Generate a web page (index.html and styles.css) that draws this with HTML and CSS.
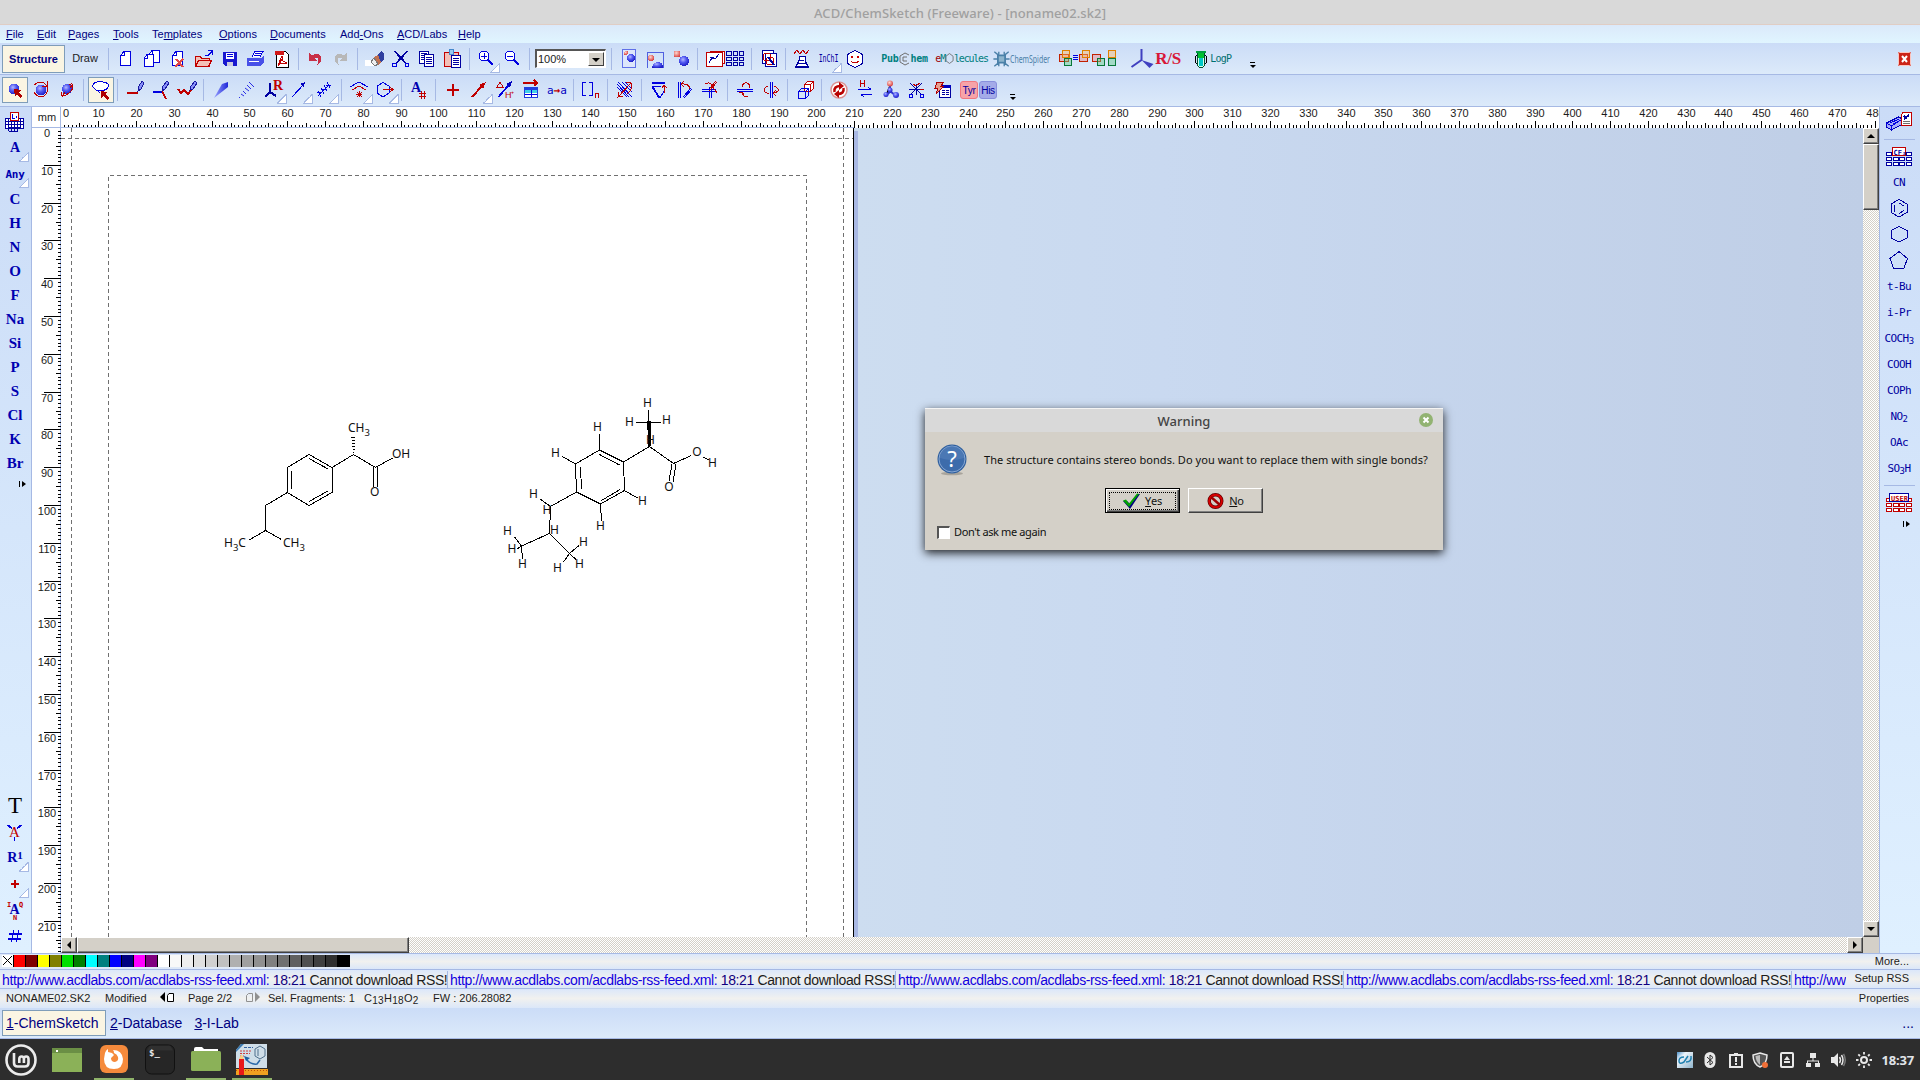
FILE: index.html
```html
<!DOCTYPE html>
<html lang="en">
<head>
    <meta charset="UTF-8">
    <title>ACD/ChemSketch (Freeware) - [noname02.sk2]</title>
    <link rel="stylesheet" href="styles.css">
</head>
<body>

    <svg class="defs" width="0" height="0">
        <defs>
            <radialGradient id="ball" cx="40%" cy="35%" r="65%"><stop offset="0" stop-color="#b4b8ff"/><stop offset=".5" stop-color="#5058f0"/><stop offset="1" stop-color="#2020c8"/></radialGradient>
            <radialGradient id="redball" cx="40%" cy="35%" r="65%"><stop offset="0" stop-color="#ffd8d0"/><stop offset="1" stop-color="#d84040"/></radialGradient>
            <linearGradient id="wedge" x1="0" x2="1"><stop offset="0" stop-color="#9aa4ff"/><stop offset="1" stop-color="#2028d8"/></linearGradient>
            <linearGradient id="sheet" x1="0" y1="0" x2="1" y2="1"><stop offset="0" stop-color="#4a90c8"/><stop offset=".3" stop-color="#eef4fa"/><stop offset="1" stop-color="#8fb4cc"/></linearGradient>
        </defs>
    </svg>

    <header class="titlebar">ACD/ChemSketch (Freeware) - [noname02.sk2]</header>

    <nav class="menu">
        <span><u>F</u>ile</span><span><u>E</u>dit</span><span><u>P</u>ages</span><span><u>T</u>ools</span><span>Te<u>m</u>plates</span><span><u>O</u>ptions</span><span><u>D</u>ocuments</span><span>Add<u>-</u>Ons</span><span><u>A</u>CD/Labs</span><span><u>H</u>elp</span>
    </nav>

    <!-- main toolbar -->
    <div class="toolbar top">
        <div class="mode active">Structure</div>
        <div class="mode draw">Draw</div>
        <i class="sep"></i>
        <div class="tool"><svg viewBox="0 0 22 22"><path class="b w" d="M9 3.500h6.500v14h-10v-10z"/><path class="b" d="M9.500 3.500v4h-4"/></svg></div>
        <div class="tool"><svg viewBox="0 0 22 22"><path class="b w" d="M11 2.500h7.500v12h-10v-9z"/><path class="b w" d="M6 6.500h6.500v12h-9v-9z"/><path class="b" d="M6.500 6.500v4h-3M11.500 2.500v4"/></svg></div>
        <div class="tool"><svg viewBox="0 0 22 22"><path class="b w" d="M9 3.500h6.500v14h-10v-10z"/><path class="b" d="M9.500 3.500v4h-4"/><path stroke="#e04848" stroke-width="2" d="M9 11l7 8M16 11l-8 8"/></svg></div>
        <div class="tool"><svg viewBox="0 0 22 22"><path class="r" d="M2.500 18.500v-10h5l1 2h8v8z" fill="#f5b0b0"/><path class="r" fill="#f8d0d0" d="M2.500 18.500l3-6h13l-3 6z"/><path class="b" d="M12 7.500h3l4-4M15 2.500h4.500v4"/></svg></div>
        <div class="tool"><svg viewBox="0 0 22 22"><path fill="#1818d0" d="M4 4h14v14h-12l-2-2z"/><path fill="#fff" d="M7 5h8v6h-8z"/><path class="b" d="M8 6.500h6M8 8.500h6"/><path fill="#ccd" d="M8 14h6v4h-6z"/></svg></div>
        <div class="tool"><svg viewBox="0 0 22 22"><path class="b w" d="M7 9l3-5.500h8l-3 5.500"/><path fill="#4850e8" d="M2 10h14l3-2v6l-4 4h-13z"/><path class="b" d="M10 5.500h6M9 7.500h6"/><path fill="#fff" d="M4 13h10v1h-10z"/></svg></div>
        <div class="tool"><svg viewBox="0 0 22 22"><path class="k w" d="M5.500 3.500h9l3 3v13h-12z"/><path fill="#d01818" d="M4 3h9v4h-9z"/><path class="r" d="M7 17l4-9 1 5 4 2h-6l-3 3M8 17l4-8"/></svg></div>
        <i class="sep"></i>
        <div class="tool"><svg viewBox="0 0 22 22"><path fill="#c83048" d="M5 5v8h8l-3-3q5-2 4 4 0 3-3 4 7-2 6-8-1-6-9-3z"/></svg></div>
        <div class="tool"><svg viewBox="0 0 22 22"><path fill="#b8b8b8" d="M17 5v8h-8l3-3q-5-2-4 4 0 3 3 4-7-2-6-8 1-6 9-3z"/></svg></div>
        <i class="sep"></i>
        <div class="tool"><svg viewBox="0 0 22 22"><path fill="#fff" d="M1 12h9v6h-9z"/><path fill="#3040a0" d="M13 7l5-4 2 3v5l-4 5z"/><path fill="#c07050" d="M10 9l4-2 3 7-3 3z"/><path fill="#eee" stroke="#777" d="M7 14l3-4 4 6-3 2z"/></svg></div>
        <div class="tool"><svg viewBox="0 0 22 22"><path class="n" d="M4 3l12 13M5 3l12 13M18 3l-12 13M17 3l-12 13"/><circle class="b" cx="4.500" cy="17" r="2"/><circle class="b" cx="17" cy="17" r="2"/></svg></div>
        <div class="tool"><svg viewBox="0 0 22 22"><path class="n w" d="M3.500 3.500h9v12h-9z"/><path class="n w" d="M8.500 6.500h9v12h-9z"/><path class="n" d="M5 5.500h6M5 7.500h3M5 9.500h3M5 11.500h3M10 9.500h6M10 11.500h6M10 13.500h6M10 15.500h6"/></svg></div>
        <div class="tool"><svg viewBox="0 0 22 22"><path class="r" fill="#f0b0a8" d="M2.500 4.500h14v14h-14z"/><path fill="#9ce" stroke="#48c" d="M7.500 1.500h4v5h-4z"/><path class="n w" d="M9.500 7.500h9v12h-9z"/><path class="n" d="M11 10.500h6M11 12.500h6M11 14.500h6M11 16.500h6"/></svg></div>
        <i class="sep"></i>
        <div class="tool more"><svg viewBox="0 0 22 22"><circle class="b w" cx="9" cy="8" r="5"/><path class="b" d="M6 8.500h6M9.500 5v6"/><path class="b t2" d="M13 12l5 5"/></svg></div>
        <div class="tool"><svg viewBox="0 0 22 22"><circle class="b w" cx="9" cy="8" r="5"/><path class="b" d="M6 8.500h6"/><path class="b t2" d="M13 12l5 5"/></svg></div>
        <i class="sep"></i>
        <div class="combo"><span>100%</span><b></b></div>
        <i class="sep"></i>
        <div class="tool"><svg viewBox="0 0 22 22"><path fill="#dde6fb" stroke="#6070e8" d="M4.500 1.500h13v18h-13z"/><circle cx="8" cy="5" r="2" fill="url(#redball)"/><circle cx="13" cy="10" r="4" fill="url(#ball)"/></svg></div>
        <div class="tool"><svg viewBox="0 0 22 22"><path d="M3.500 19.500v-15h16v15" fill="none" stroke="#5060e0"/><circle cx="7" cy="10" r="3" fill="url(#redball)"/><path d="M8 20q1-6 6-6t5 6z" fill="url(#ball)"/></svg></div>
        <div class="tool"><svg viewBox="0 0 22 22"><circle cx="7" cy="6" r="3.500" fill="url(#redball)"/><circle cx="14" cy="13" r="5" fill="url(#ball)"/></svg></div>
        <i class="sep"></i>
        <div class="tool wide"><svg viewBox="0 0 40 22"><path class="n" d="M21.500 3.500h5v4h-5zM28.500 3.500h4v4h-4zM34.500 3.500h4v4h-4zM21.500 9.500h5v3h-5zM28.500 9.500h4v3h-4zM34.500 9.500h4v3h-4zM21.500 14.500h5v3h-5zM28.500 14.500h4v3h-4zM34.500 14.500h4v3h-4z"/><path class="r w" d="M5.500 3.500h14v12h-14z"/><path class="r w" d="M1.500 4.500h16v14h-16z"/><path class="n" d="M4 15l3-5h4l3-4M5 9.500h4"/></svg></div>
        <i class="sep"></i>
        <div class="tool"><svg viewBox="0 0 22 22"><path class="n w" d="M4.500 2.500h11v13h-11z"/><path class="n w" d="M7.500 5.500h11v13h-11z"/><circle class="r" cx="9" cy="9" r="4"/><circle class="r" cx="12" cy="13" r="4"/><path class="n t2" d="M10 9l6 8"/></svg></div>
        <i class="sep"></i>
        <div class="tool"><svg viewBox="0 0 22 22"><path class="r" d="M3 6l3-4 3 4 3-4 3 4 3-4"/><path class="n w" d="M8 8.500h6v4l3 6h-12l3-6z"/><path class="n" d="M7 15.500h8M9 12.500h4M4 19.500h14"/></svg></div>
        <div class="tool more inchi"><span>InChI</span></div>
        <div class="tool face"><svg viewBox="0 0 22 22"><path class="n w" d="M11 2.500l7.500 4v9l-7.500 4-7.500-4v-9z"/><path fill="#c00" d="M7 8h2v2h-2zM13 8h2v2h-2z"/><path class="r" d="M7 13q4 4 8 0"/></svg></div>
        <div class="brand pubchem">Pub<svg viewBox="0 0 12 14"><path class="g" d="M10 3l-4-2-5 3v6l5 3 4-2M8 5L4 5v4h4"/></svg>hem</div>
        <div class="brand emol"><em>e</em>M<svg viewBox="0 0 10 12"><path class="g" d="M5 .5l4 3v5l-4 3-4-3v-5z"/></svg>lecules</div>
        <div class="brand spider"><svg viewBox="0 0 18 20"><path d="M1 2l5 4M17 2l-5 4M0 10h18M1 18l5-4M17 18l-5-4M6 2v3M12 2v3M6 18v-4M12 18v-4" stroke="#4a80a8" stroke-width="1.500"/><path d="M5 6h8v8h-8z" fill="#8db4cc" stroke="#4a80a8" stroke-width="2"/></svg><span>ChemSpider</span></div>
        <div class="brand"><svg class="overlap" viewBox="0 0 60 22"><g fill-opacity=".45"><path fill="#e88" stroke="#c22000" d="M1.500 6.500h9v7h-9z"/><path fill="#fb6" stroke="#e08000" d="M4.500 2.500h7v7h-7z"/><path fill="#6c8" stroke="#087838" d="M6.500 10.500h7v7h-7z"/><path fill="#e88" stroke="#c22000" d="M21.500 6.500h8v7h-8z"/><path fill="#fb6" stroke="#e08000" d="M24.500 2.500h7v7h-7z"/><path fill="#e88" stroke="#c22000" d="M34.500 6.500h8v7h-8z"/><path fill="#6c8" stroke="#087838" d="M39.500 10.500h7v7h-7z"/><path fill="#6c8" stroke="#087838" d="M50.500 10.500h7v7h-7z"/><path fill="#fb6" stroke="#e08000" d="M50.500 2.500h7v7h-7z"/></g><path class="b" d="M15 7.500h5M15 9.500h5M15 11.500h5"/></svg></div>
        <div class="brand rs"><svg viewBox="0 0 24 22"><path fill="none" stroke="#4040c0" stroke-width="2" d="M11 1v11l-10 7"/><path fill="#4040c0" d="M11 12l12 4-4 4z"/></svg>R/S</div>
        <div class="brand logp"><svg viewBox="0 0 14 20"><path fill="#d8ffe8" stroke="#005030" d="M3.500 2.500h7v14q-3.500 4-7 0z"/><path fill="#00c030" d="M4 4h6v5h-6z"/><path fill="#00c8c8" d="M5 9h4v8h-4z"/><path fill="#00a040" d="M2 2h10v2h-10z"/><path class="k" d="M2.500 6l-1 2v5l1 2M11.500 6l1 2v5l-1 2"/></svg>LogP</div>
        <div class="overflow"></div>
        <div class="doc-close"><svg viewBox="0 0 13 14"><rect width="13" height="14" rx="1" fill="#cc2418"/><rect x=".5" y=".5" width="12" height="13" rx="1" fill="none" stroke="#fbc6c0"/><path d="M4 4l5 6M9 4l-5 6" stroke="#fff" stroke-width="2"/></svg></div>
    </div>

    <!-- structure toolbar -->
    <div class="toolbar tools">
        <div class="tool on"><svg viewBox="0 0 22 22"><circle cx="10" cy="10" r="5.500" fill="url(#ball)"/><path fill="#b00000" d="M10 10l7 1-2 2 3 4-2 2-3-4-2 2z"/></svg></div>
        <div class="tool"><svg viewBox="0 0 22 22"><circle cx="11" cy="11" r="5.500" fill="url(#ball)"/><path class="r" d="M4 6q7-6 12 0 4 6-2 11-7 2-10-4M17 2v5h-5"/></svg></div>
        <div class="tool"><svg viewBox="0 0 22 22"><circle cx="11" cy="10" r="5" fill="url(#ball)"/><path class="r" d="M6 13q-2 6 4 3 7-4 7-9 0-4-4-1M14 9l3-4M6 18l3-5"/></svg></div>
        <i class="sep"></i>
        <div class="tool on"><svg viewBox="0 0 22 22"><path class="b w" d="M8 12q-6-3-5-6 1-4 10-3 7 1 5 5-2 4-7 3-4 0-1 3"/><path fill="#b00000" d="M11 12l6 1-2 2 4 4-2 2-4-4-2 2z"/></svg></div>
        <i class="sep"></i>
        <div class="tool"><svg viewBox="0 0 22 22"><path class="r t2" d="M3 14h11"/><path fill="#8890f8" stroke="#1818a0" d="M14 12l1-5 3-5 2 2-3 6z"/></svg></div>
        <div class="tool"><svg viewBox="0 0 22 22"><path class="b t2" d="M3 13h9"/><path class="r t2" d="M12 12l4 8"/><path fill="#8890f8" stroke="#1818a0" d="M12 12l1-5 4-5 2 2-4 6z"/></svg></div>
        <div class="tool"><svg viewBox="0 0 22 22"><path class="r t2" d="M2 10l3 4 3-3 4 4 3-4"/><path fill="#8890f8" stroke="#1818a0" d="M14 11l1-4 4-5 2 2-4 6z"/></svg></div>
        <i class="sep"></i>
        <div class="tool"><svg class="soft" viewBox="0 0 22 22"><path fill="url(#wedge)" d="M4 19L12 5l6-2v5z"/></svg></div>
        <div class="tool"><svg class="soft" viewBox="0 0 22 22"><path class="b" d="M3 19l1-1M5 15l3 2M7 12l3 3M9 9l4 3M11 6l4 4M13 3l5 5" stroke-opacity=".8"/></svg></div>
        <div class="tool more"><svg viewBox="0 0 22 22"><path class="n t2" d="M8 4v9l-5 5M8 13l6 4"/><text x="11" y="11" class="letter red">R</text></svg></div>
        <div class="tool more"><svg viewBox="0 0 22 22"><path class="b" d="M4 18L17 4"/><path fill="#0000c0" d="M17 3l-1 5-4-3z"/></svg></div>
        <div class="tool more"><svg viewBox="0 0 22 22"><path class="b" d="M4 17l11-11M4 12l3 6M7 9l3 6M10 6l3 6M13 3l3 6M3 13h5M7 10h6M12 6h5"/></svg></div>
        <i class="sep"></i>
        <div class="tool more"><svg viewBox="0 0 22 22"><path class="b" d="M2 8l9-5 9 5"/><path class="r" d="M4 11l7-4 7 4M8 15.500h6M11.500 12v6M9 13l5 5M14 13l-5 5"/></svg></div>
        <div class="tool more"><svg viewBox="0 0 22 22"><path class="b" d="M9 3.500l6 3.500v7l-6 4-6-4v-7z"/><path class="r" d="M9 10.500h10M16 8l3 2.500-3 2.500"/></svg></div>
        <i class="sep"></i>
        <div class="tool"><svg viewBox="0 0 22 22"><text x="3" y="13" class="letter blue">A</text><path class="r" d="M11 14.500h7M11 17.500h7M13.500 12v8M16.500 12v8"/></svg></div>
        <i class="sep"></i>
        <div class="tool"><svg viewBox="0 0 22 22"><path class="r t2" d="M5 11h12M11 5v12"/></svg></div>
        <div class="tool more"><svg viewBox="0 0 22 22"><path class="r t2" d="M4 18L15 6"/><path fill="#c00000" d="M18 3l-3 7-4-4z"/></svg></div>
        <div class="tool"><svg viewBox="0 0 22 22"><path class="r" d="M3 8l3-5 3 5z"/><path class="b" d="M4 18L15 5M5 18L16 5"/><path fill="#0000c0" d="M18 2l-2 7-4-4z"/><text x="11" y="19" class="small red">H⁺</text></svg></div>
        <div class="tool"><svg viewBox="0 0 22 22"><path class="r t2" d="M3 4h13M14 1l3 3-3 3"/><path fill="#2040e0" d="M4 8h14v11h-14z"/><path fill="#40d0e8" d="M5 11h12v3h-12z"/><path fill="#fff" d="M5 14h12v4h-12z"/><path class="b" d="M11.500 11v7M5 15.500h12"/></svg></div>
        <div class="tool"><span class="aa">a<b>→</b>a</span></div>
        <i class="sep"></i>
        <div class="tool"><svg viewBox="0 0 22 22"><path class="b" d="M6 3.500h-3.500v13h3.500M9 3.500h3.500v13h-3.500"/><path class="r" d="M15.500 19v-5h3v5"/></svg></div>
        <i class="sep"></i>
        <div class="tool"><svg viewBox="0 0 22 22"><path class="b" d="M4 3l14 15M3 8l10 10M8 3l10 10M3 5l12 13M11 3l7 7"/><path class="r" d="M4 18L17 4M5 13l-1 5 5-1M12 4q5-2 6 2 0 5-5 9"/></svg></div>
        <i class="sep"></i>
        <div class="tool"><svg viewBox="0 0 22 22"><path class="b" d="M4 3.500h13M4 4.500h13M4 7.500h9M4 8l7 11M5 8l7 11 4-7"/><path class="r" d="M16 14v-7M14 9l2-3 3 3"/></svg></div>
        <div class="tool"><svg viewBox="0 0 22 22"><path class="b" d="M4.500 3v16M6.500 3v16M9 18l8-9M10 19l8-9"/><path class="r" d="M7 5q8-1 9 5M10 2l-3 3 3 3"/></svg></div>
        <div class="tool"><svg viewBox="0 0 22 22"><path class="b" d="M2 10.500h14M2 12.500h14M9.500 8v11M11.500 8v11"/><path class="r" d="M5 5q5-3 7 2l5 7M17 3l-8 9M16 2l-6 7"/></svg></div>
        <i class="sep"></i>
        <div class="tool"><svg viewBox="0 0 22 22"><path class="b" d="M3 10.500h16M3 12.500h16"/><path class="r" d="M8 8q1-5 5-4 4 2 2 5M8 14q2 5 6 3M5 14l3-1 2 3"/></svg></div>
        <div class="tool"><svg viewBox="0 0 22 22"><path class="b" d="M10.500 3v16M12.500 3v16"/><path class="r" d="M8 7q-5 2-3 6 3 2 4 2M14 7q5 2 4 5-2 2-5 2M16 17l-3-3 3-3"/></svg></div>
        <i class="sep"></i>
        <div class="tool"><svg viewBox="0 0 22 22"><path class="r w" d="M10.500 5.500l3-3h6v7l-3 3h-6zM10.500 5.500h6v7M16.500 5.500l3-3"/><path class="b" d="M4.500 12.500l3-3h7v7l-3 3h-7zM4.500 12.500h7v7M11.500 12.500l3-3"/></svg></div>
        <i class="sep"></i>
        <div class="tool"><svg class="soft" viewBox="0 0 22 22"><circle cx="11" cy="11" r="8" fill="#fff" stroke="#dc9090" stroke-width="1.500"/><path fill="none" stroke="#b80000" stroke-width="2.500" d="M6.500 13q-1-6 6-6M15.500 9q1 6-6 6"/><path fill="#b80000" d="M11 3l5 4-5 4zM11 19l-5-4 5-4z"/></svg></div>
        <div class="tool"><svg viewBox="0 0 22 22"><path class="r" d="M6.500 1v7M10.500 1v7M7 4.500h3"/><path class="b" d="M4 10.500h13M14 8l3 2.500M18 15.500h-11M10 18l-3-2.500"/></svg></div>
        <div class="tool"><svg class="soft" viewBox="0 0 22 22"><path stroke="#3038d0" stroke-width="2" d="M10 5v8l-5 4M10 12l6 5"/><circle cx="10" cy="4.500" r="3" fill="url(#redball)"/><circle cx="10" cy="11" r="2.500" fill="url(#ball)"/><circle cx="6" cy="15.500" r="2.500" fill="url(#ball)"/><circle cx="16" cy="16" r="3" fill="url(#ball)"/></svg></div>
        <div class="tool"><svg viewBox="0 0 22 22"><path class="n" d="M4 4l12 12M16 4L4 16M3 10.500h15M10.500 5v11"/><path class="r" d="M7 5l3 2 4-3M14 11l4-1"/><circle class="b" cx="5" cy="17" r="2"/><circle class="b" cx="16" cy="17" r="2"/></svg></div>
        <div class="tool"><svg viewBox="0 0 22 22"><path class="n w" d="M7.500 6.500h11v12h-11z"/><path fill="#0000c0" d="M7 6h12v3h-12z"/><path class="n" d="M10 11.500h3M14 11.500h3M10 13.500h3M14 13.500h3M10 15.500h3M14 15.500h3"/><path fill="#e8a090" stroke="#b00000" d="M5 3h7l-3 4h3l-8 8 2-6h-3z"/></svg></div>
        <div class="peptide"><span>Tyr</span><span>His</span></div>
        <div class="overflow"></div>
    </div>

    <main class="work">
        <aside class="side left">
            <div class="cell"><svg viewBox="0 0 22 22"><path class="n w" d="M1.500 7.500h18v10h-18z"/><path class="n" d="M1 10.500h18M1 13.500h18M4 16.500h12M4.500 7v13M7.500 8v12M10.500 8v12M13.500 8v12M16.500 7v10M4.500 20h9"/><path class="r w" d="M6.500 1.500h8v8h-8z"/><path class="b" d="M8.500 3v4h2M12.500 5v2"/></svg></div>
            <div class="cell mono more">A</div>
            <div class="cell mono any more">Any</div>
            <div class="el">C</div><div class="el">H</div><div class="el">N</div><div class="el">O</div><div class="el">F</div><div class="el">Na</div><div class="el">Si</div><div class="el">P</div><div class="el">S</div><div class="el">Cl</div><div class="el">K</div><div class="el">Br</div>
            <div class="next"><svg viewBox="0 0 7 6"><path d="M0 0h1v6h-1zM3 0l4 3-4 3z"/></svg></div>
            <div class="cell push bigt">T</div>
            <div class="cell"><svg viewBox="0 0 22 22"><path class="b" d="M3 4l5 4M4 4l4 3M18 4l-5 4M17 4l-4 3M10.500 16v4"/><text x="5" y="16" class="letter red thin">A</text></svg></div>
            <div class="cell mono r1 more">R<sup>1</sup></div>
            <div class="cell more"><svg viewBox="0 0 22 22"><path class="r t2" d="M7 11h8M11 7v8"/></svg></div>
            <div class="cell"><svg viewBox="0 0 22 22"><text x="5.500" y="15" class="letter blue">A</text><text x="3" y="8" class="tiny">I</text><text x="15" y="8" class="tiny">Q</text><text x="9" y="21" class="tiny">N</text></svg></div>
            <div class="cell"><svg viewBox="0 0 22 22"><path class="b" d="M5 9.500h13M4 13.500h13M9.500 5l-2 12M14.500 5l-2 12"/><path class="b" d="M5 8.500h13M4 14.500h13"/></svg></div>
        </aside>

        <section class="editor">
            <div class="unit">mm</div>
            <svg class="ruler-h" id="rulerH"></svg>
            <svg class="ruler-v" id="rulerV"></svg>
            <div class="canvas">
                <div class="page">
                    <svg class="margins" width="792" height="809">
                        <path d="M10.500 0V809M782.500 0V809M0 10.500H792"/>
                        <path d="M47.500 809V47.500H745.500V809"/>
                    </svg>
                    <svg class="molecules" width="530" height="200" viewBox="0 0 530 200">
                        <g class="bonds">
                            <path d="M99 74.500L122 87.500V112.500L99 125.500L77.500 112.500V87.500ZM81.500 91V109M99 78.500L118 89M99 121.500L118 111"/>
                            <path d="M122 87.500L143.500 74.500L165.500 87.500L182.500 78M163.500 87V107M167.500 87V107"/>
                            <path d="M141 57.500h4M142 60.500h3M142 63.500h3M142 66.500h3M143 69.500h2M143 72.500h1"/>
                            <path d="M77.500 112.500L55.500 125.500V150.500L39 160M55.500 150.500L71.500 159.500"/>
                            <path d="M389.500 70L413.500 82L414.500 110.500L390.500 124L366.500 112L365.500 84ZM389.500 74.500L409.500 85M370.500 87L371.500 109M410 109.500L391.500 120.500"/>
                            <path d="M389.500 53.500V70M352.500 76.500L365.500 84M414.500 110.500L427.500 118M390.500 124L391.500 141"/>
                            <path d="M413.500 82L439.500 66.500L463.500 83.500L481.500 75.500M493 77L498.500 80M462 84L459 101M466 84L463 102"/>
                            <path d="M426 42.500H451M438.500 30V42"/>
                            <path class="solid" d="M437.500 41.500H440.500L440 66.500H439Z"/>
                            <path d="M366.500 112L340.500 126.500L330 119M340.500 126.500L339.500 153.500L311.500 166L304.500 157M311.500 166L307 169M311.500 166L312.500 179"/>
                            <path d="M339.500 153.500L359.500 173.500L369 165.500M359.500 173.500L353.500 182M359.500 173.500L366 179.500"/>
                        </g>
                        <g class="atoms">
                            <text x="138" y="52">CH<tspan class="sub" dy="4">3</tspan></text>
                            <text x="182" y="78">OH</text>
                            <text x="160" y="116">O</text>
                            <text x="14" y="167">H<tspan class="sub" dy="4">3</tspan><tspan dy="-4">C</tspan></text>
                            <text x="73" y="167">CH<tspan class="sub" dy="4">3</tspan></text>
                        </g>
                        <g class="atoms mid">
                            <text x="437.500" y="27">H</text><text x="419.500" y="46">H</text><text x="456.500" y="44">H</text>
                            <text x="440.500" y="64">H</text><text x="387.500" y="51">H</text><text x="345.500" y="77">H</text>
                            <text x="432.500" y="125">H</text><text x="390.500" y="150">H</text><text x="487" y="76">O</text>
                            <text x="502.500" y="87">H</text><text x="459" y="111">O</text><text x="323.500" y="118">H</text>
                            <text x="337" y="134">H</text><text x="344.500" y="154">H</text><text x="297.500" y="155">H</text>
                            <text x="302" y="173">H</text><text x="312.500" y="188">H</text><text x="373.500" y="166">H</text>
                            <text x="347.500" y="192">H</text><text x="369.500" y="188">H</text>
                        </g>
                    </svg>
                </div>
            </div>
            <div class="scroll vert">
                <div class="btn up"></div><div class="thumb"></div><div class="track"></div><div class="btn down"></div>
            </div>
            <div class="scroll horiz">
                <div class="btn prev"></div><div class="thumb"></div><div class="track"></div><div class="btn fwd"></div>
            </div>
            <div class="corner"></div>
        </section>

        <aside class="side right">
            <div class="cell"><svg class="w28" viewBox="0 0 28 22"><path fill="#a8aef8" stroke="#0000c0" d="M1.500 12l12-6 4 2v5l-11 6-5-3z"/><path class="b" d="M1.500 12l5 3 11-7M6.500 15v4M5 12l9-4M8 13l8-4"/><path class="r w" d="M18 1.500h8.500v13h-10v-11z"/><path class="n t2" d="M19 8l5-4M19 5l3 3"/><path class="g" d="M18 10.500h7M18 12.500h7"/></svg></div>
            <hr>
            <div class="cell"><svg class="w28" viewBox="0 0 28 22"><path class="n w" d="M1.500 7.500h5v3h-5zM21.500 7.500h5v3h-5zM1.500 12.500h5v3h-5zM8.500 12.500h5v3h-5zM14.500 12.500h5v3h-5zM21.500 12.500h5v3h-5zM1.500 17.500h5v3h-5zM8.500 17.500h5v3h-5zM14.500 17.500h5v3h-5zM21.500 17.500h5v3h-5z"/><path class="r w" d="M7.500 2.500h13v8h-13z"/><text x="8.500" y="9.500" class="tiny bl">CF₃</text></svg></div>
            <div class="cell frag">CN</div>
            <div class="cell"><svg viewBox="0 0 22 22"><path class="n" d="M11 2.500l8 4.500v8.500l-8 4.500-8-4.500v-8.500zM6.500 8v6.500M11 6l5 3M11 16.500l5-3"/></svg></div>
            <div class="cell"><svg viewBox="0 0 22 22"><path class="n" d="M11 3.500l8 4v7.500l-8 4-8-4v-7.500z"/></svg></div>
            <div class="cell"><svg viewBox="0 0 22 22"><path class="n" d="M11 2.500l8.500 7-3.500 9.500h-10.500l-3.500-9.500z"/></svg></div>
            <div class="cell frag">t-Bu</div><div class="cell frag">i-Pr</div><div class="cell frag">COCH<sub>3</sub></div><div class="cell frag">COOH</div><div class="cell frag">COPh</div><div class="cell frag">NO<sub>2</sub></div><div class="cell frag">OAc</div><div class="cell frag">SO<sub>3</sub>H</div>
            <hr>
            <div class="cell"><svg class="w28" viewBox="0 0 28 22"><path class="r w" d="M1.500 7.500h5v3h-5zM21.500 7.500h5v3h-5zM1.500 12.500h5v3h-5zM8.500 12.500h5v3h-5zM14.500 12.500h5v3h-5zM21.500 12.500h5v3h-5zM1.500 17.500h5v3h-5zM8.500 17.500h5v3h-5zM14.500 17.500h5v3h-5zM21.500 17.500h5v3h-5z"/><path class="n w" d="M4.500 2.500h19v8h-19z"/><text x="6" y="9.500" class="tiny">USER</text></svg></div>
            <div class="next"><svg viewBox="0 0 7 6"><path d="M0 0h1v6h-1zM3 0l4 3-4 3z"/></svg></div>
        </aside>
    </main>

    <div class="strip colors">
        <div class="swatches" id="swatches"></div>
        <span>More...</span>
    </div>

    <div class="strip rss">
        <div class="feed">
            <p><a>http://www.acdlabs.com/acdlabs-rss-feed.xml:</a> <em>18:21</em> Cannot download RSS!</p>
            <p><a>http://www.acdlabs.com/acdlabs-rss-feed.xml:</a> <em>18:21</em> Cannot download RSS!</p>
            <p><a>http://www.acdlabs.com/acdlabs-rss-feed.xml:</a> <em>18:21</em> Cannot download RSS!</p>
            <p><a>http://www.acdlabs.com/acdlabs-rss-feed.xml:</a> <em>18:21</em> Cannot download RSS!</p>
            <p><a>http://ww</a></p>
        </div>
        <span>Setup RSS</span>
    </div>

    <div class="strip status">
        <div class="info">
            <span>NONAME02.SK2</span>
            <span>Modified</span>
            <svg viewBox="0 0 14 11"><path d="M5 0v10L0 5z"/><path fill="#fff" stroke="#000" d="M9 1.500h4.500v8h-6V3.500z"/></svg>
            <span>Page 2/2</span>
            <svg viewBox="0 0 14 11"><path fill="none" stroke="#909090" d="M2.500 1.500h4v8h-6V3.500z"/><path fill="#909090" d="M9 0v10l5-5z"/></svg>
            <span>Sel. Fragments: 1</span>
            <span class="formula">C<sub>13</sub>H<sub>18</sub>O<sub>2</sub></span>
            <span>FW : 206.28082</span>
        </div>
        <span>Properties</span>
    </div>

    <div class="windows">
        <span class="active"><u>1</u>-ChemSketch</span><span><u>2</u>-Database</span><span><u>3</u>-I-Lab</span>
        <i>...</i>
    </div>

    <footer class="taskbar">
        <div class="apps">
            <div class="app"><svg viewBox="0 0 32 32"><circle cx="16" cy="16" r="14.500" fill="none" stroke="#ececec" stroke-width="2.600"/><path fill="none" stroke="#ececec" stroke-width="2.600" d="M9 9v10q0 3.500 3.500 3.500h7.500q3.500 0 3.500-3.500v-4q0-2.500-2.300-2.500t-2.300 2.500v4M18.900 19v-4q0-2.500-2.300-2.500t-2.300 2.500v4"/></svg></div>
            <div class="app"><svg viewBox="0 0 32 32"><path fill="#6b8f45" d="M0 4h30v6H0z"/><path fill="#8bb158" d="M0 9h30v19H0z"/><path fill="#fff" d="M4 6h2v2h-2z"/></svg></div>
            <div class="app open"><svg viewBox="0 0 32 32"><rect x="2" y="1" width="28" height="28" rx="6" fill="#f58a3c"/><path fill="#fff" d="M7 9q1-3 3-4v3l4 1 2 2-3 3q0 4 4 4 4-1 3-5-1-3-4-4 0-2-1-3 9 0 10 9 0 10-9 10-10 0-10-10z"/></svg></div>
            <div class="app"><svg viewBox="0 0 32 32"><rect x="1.500" y="1" width="29" height="29" rx="6" fill="#262626" stroke="#111"/><path fill="#3a3a3a" d="M6 1.500h20l3 5H3z" opacity=".5"/><text x="5" y="12" class="prompt">$_</text></svg></div>
            <div class="app open"><svg viewBox="0 0 32 32"><path fill="#fff" d="M4 5q0-2 2-2h6l2 2h14v5H4z"/><rect x="1" y="7" width="30" height="20" rx="1.500" fill="#8bb158"/></svg></div>
            <div class="app open"><svg viewBox="0 0 32 32"><path fill="#cfdee8" d="M5 0h26v24H0V6z"/><path fill="#3878b0" d="M5 0h3L0 8V6z"/><path fill="none" stroke="#50708c" d="M24 2l5 3v7l-5 3-5-3V5zM22 5v7"/><path fill="none" stroke="#2868a8" stroke-width="1.500" d="M10 15q5 6 11 5l3-4"/><path fill="#2060a0" d="M8 12l6 2-4 3z"/><path fill="none" stroke="#3060a0" stroke-dasharray="3 1" d="M8 3.500h9"/><path fill="none" stroke="#d04040" stroke-dasharray="2 1" d="M4 7h12M4 9.500h10M4 12h4"/><path fill="#f0a020" d="M0 25h32v6H0z"/><path fill="none" stroke="#c05008" stroke-dasharray="1 2" d="M0 26.500h32"/><path fill="#e81818" d="M3 15h5v16H3z"/><path fill="#f8d080" d="M3 15l2.500-5 2.500 5z"/></svg></div>
        </div>
        <div class="tray">
            <svg viewBox="0 0 16 16"><path fill="url(#sheet)" d="M0 0h16v16H0z"/><path fill="none" stroke="#2080b0" stroke-width="1.500" d="M7 5Q2 5 2 9t5 1l4-6M9 10q6 0 5-6"/></svg>
            <svg viewBox="0 0 16 16"><rect x="2.500" y="0" width="11" height="16" rx="5.500" fill="#e8e8e8"/><path fill="none" stroke="#2d2d2d" d="M5 5l6 5.500-3 2.500v-10l3 2.500-6 5.500"/></svg>
            <svg viewBox="0 0 16 16"><path fill="none" stroke="#e8e8e8" stroke-width="2" d="M2 3h12v12H2zM6 2h4"/><path fill="#e8e8e8" d="M7 5h2v5H7zM7 11h2v2H7z"/></svg>
            <svg class="shield" viewBox="0 0 16 16"><path fill="#555" stroke="#e8e8e8" stroke-width="1.500" d="M8 1l7 2q0 9-7 12Q1 12 1 3z"/><path fill="#bbb" d="M8 3v10Q4 10 3.500 4z"/><circle cx="13" cy="13" r="3" fill="#f07038"/></svg>
            <svg viewBox="0 0 16 16"><rect x="2" y="1" width="12" height="14" rx="1" fill="none" stroke="#e8e8e8" stroke-width="2"/><path fill="#e8e8e8" d="M8 4l3 4H5zM5 9h6v2H5z"/></svg>
            <svg viewBox="0 0 16 16"><path fill="#e8e8e8" d="M5 1h6v5H5zM1 11h5v4H1zM10 11h5v4h-5zM7.500 6h1v2.500H14V11h-1V9.500H3V11H2V8.500h5.500z"/></svg>
            <svg viewBox="0 0 16 16"><path fill="#e8e8e8" d="M1 5h3l4-4v14l-4-4H1z"/><path fill="none" stroke="#e8e8e8" stroke-width="1.500" d="M9.500 5q2 3 0 6M11.500 3q3 5 0 10"/><path fill="none" stroke="#777" stroke-width="1.500" d="M13.500 2q3.500 6 0 12"/></svg>
            <svg viewBox="0 0 16 16"><circle cx="8" cy="8" r="3" fill="none" stroke="#e8e8e8" stroke-width="2"/><path stroke="#e8e8e8" stroke-width="1.800" d="M8 0v2.500M8 13.500V16M0 8h2.500M13.500 8H16M2.300 2.300L4 4M12 12l1.700 1.700M13.700 2.300L12 4M4 12l-1.700 1.700"/></svg>
            <time>18:37</time>
        </div>
    </footer>

    <!-- warning dialog -->
    <div class="dialog">
        <div class="dialog-title">Warning
            <svg viewBox="0 0 14 14"><circle cx="7" cy="7" r="7" fill="#92b372"/><path d="M4.500 4.500l5 5M9.500 4.500l-5 5" stroke="#fff" stroke-width="2"/></svg>
        </div>
        <div class="message">
            <svg viewBox="0 0 30 32"><ellipse cx="15" cy="29.500" rx="11" ry="1.800" fill="#a8a49c"/><circle cx="15" cy="15" r="14.500" fill="#2f5f9e"/><circle cx="15" cy="15" r="13" fill="#3d6cab" stroke="#88a8d4"/><path fill="#5580ba" d="M3 14a12 12 0 0 1 24 0q-12 4-24 0z" opacity=".6"/><text x="15" y="23" class="qmark">?</text></svg>
            <p>The structure contains stereo bonds. Do you want to replace them with single bonds?</p>
        </div>
        <div class="actions">
            <button class="default"><span><svg viewBox="0 0 17 16"><path fill="#000080" d="M0 8l4 0 3 3 8-10h2l-10 15z"/><path fill="#00a000" d="M0 7.500l3-1 3 4 8-10 2 .5-10 13z"/></svg><u>Y</u>es</span></button>
            <button><span><svg viewBox="0 0 17 16"><circle cx="8.500" cy="8" r="6.300" fill="none" stroke="#600000" stroke-width="3.400"/><circle cx="8.500" cy="8" r="6.300" fill="none" stroke="#d80000" stroke-width="2"/><path d="M4 4l9 8" stroke="#a00000" stroke-width="2.500"/></svg><u>N</u>o</span></button>
        </div>
        <label><i></i>Don't ask me again</label>
    </div>

    <script src="script.js"></script>
</body>
</html>
```
FILE: styles.css
```css
* {
    box-sizing: border-box;
}
body {
    margin: 0;
    width: 1920px;
    height: 1080px;
    overflow: hidden;
    display: flex;
    flex-direction: column;
    font-family: "Liberation Sans", Arial, sans-serif;
    font-size: 11px;
    color: #1c1c1c;
    background: #dbe8fa;
}
svg {
    display: block;
    flex: none;
}
.defs {
    position: absolute;
}
.b { stroke: #0000e0; fill: none; }
.n { stroke: #0000a0; fill: none; }
.r { stroke: #c00000; fill: none; }
.k { stroke: #000; fill: none; }
.g { stroke: #707070; fill: none; }
.w { fill: #fff; }
.t2 { stroke-width: 2; }
path.r[fill] { fill: #f3c0b8; }

/* title and menu */
.titlebar {
    height: 25px;
    padding-top: 2px;
    line-height: 23px;
    text-align: center;
    font-family: "Noto Sans", sans-serif;
    font-size: 13px;
    font-weight: 500;
    letter-spacing: .1px;
    color: #a0a0a0;
    background: #d9d9d9;
    border-bottom: 1px solid #e0cdc4;
}
.menu {
    display: grid;
    grid-template-columns: 31px 31px 45px 39px 67px 51px 70px 57px 61px 60px;
    height: 18px;
    padding-left: 6px;
    line-height: 18px;
    color: #000080;
    background: linear-gradient(#dbe9fa, #e0f5ff);
}

/* toolbars */
.toolbar {
    display: flex;
    align-items: center;
    height: 32px;
    padding-left: 2px;
    background: linear-gradient(#cbdcf7, #dceafa);
    border-bottom: 1px solid #a6b9e4;
}
.toolbar.tools {
    padding-bottom: 1px;
}
.mode {
    width: 63px;
    height: 28px;
    line-height: 27px;
    text-align: center;
    font-size: 11px;
}
.mode.active {
    color: #000080;
    font-weight: bold;
    background: #faf5e3;
    border: 1px solid #7f9db9;
}
.mode.draw {
    width: 40px;
}
.sep {
    flex: none;
    width: 1px;
    height: 22px;
    margin: 0 3.300px;
    background: #a6b9e4;
}
.tools .sep {
    margin: 0 4px 0 3px;
}
.tool {
    position: relative;
    flex: none;
    display: flex;
    align-items: center;
    justify-content: center;
    width: 26px;
    height: 26px;
}
.tool svg, .cell svg {
    width: 22px;
    height: 22px;
    shape-rendering: crispEdges;
}
.tool .soft {
    shape-rendering: auto;
}
.tool.on {
    background: #faf5e3;
    border: 1px solid #7f9db9;
}
.tool.wide {
    width: 47px;
}
.tool.wide svg {
    width: 40px;
}
.more::after {
    content: "";
    position: absolute;
    right: -1px;
    bottom: -1px;
    width: 9px;
    height: 9px;
    background: linear-gradient(135deg, transparent 50%, #a6b9e4 50%, #a6b9e4 58%, #fff 58%);
    border-right: 1px solid #a6b9e4;
    border-bottom: 1px solid #a6b9e4;
}
.letter {
    font: bold 14px "Liberation Serif", serif;
}
.letter.thin {
    font-size: 15px;
    font-weight: normal;
}
.small {
    font: 9px "Liberation Sans", sans-serif;
}
.red { fill: #c00000; }
.blue { fill: #0000b0; }
.tiny {
    font: bold 7px "DejaVu Sans Mono", monospace;
    fill: #c00000;
}
.tiny.bl {
    fill: #0000a0;
}
.combo {
    display: flex;
    justify-content: space-between;
    width: 71px;
    height: 19px;
    margin: 0 2px;
    padding: 1px;
    line-height: 15px;
    background: #fff;
    border: 1px solid #fff;
    border-top: 2px solid #555;
    border-left: 2px solid #555;
}
.combo b {
    width: 16px;
    background: #d4d0c8;
    border: 1px solid #fff;
    border-right-color: #404040;
    border-bottom-color: #404040;
}
.combo b::after {
    content: "";
    display: block;
    margin: 5px 0 0 3px;
    width: 0;
    border: 4px solid transparent;
    border-top-color: #000;
    border-bottom: 0;
}
.inchi {
    font: 11px "DejaVu Sans Mono", monospace;
    color: #0000a0;
}
.inchi span {
    transform: scaleX(.6);
}
.face {
    margin-left: 1px;
}
.aa {
    font: 11px "DejaVu Sans Mono", monospace;
    color: #0000c0;
}
.aa b {
    color: #c00000;
}
.brand {
    flex: none;
    display: flex;
    align-items: center;
    white-space: nowrap;
}
.pubchem {
    width: 49px;
    margin-left: 13px;
    font: bold 10px "DejaVu Sans Mono", monospace;
    letter-spacing: -.3px;
    color: #008080;
}
.pubchem svg {
    width: 12px;
    height: 14px;
}
.emol {
    width: 52px;
    margin-left: 5px;
    font: 10px "DejaVu Sans Mono", monospace;
    letter-spacing: -1.200px;
    color: #008080;
}
.emol em {
    color: #a00000;
    font-style: normal;
}
.emol svg {
    width: 9px;
    height: 11px;
}
.spider {
    width: 56px;
    margin-left: 6px;
    font: 11px "Noto Sans", sans-serif;
    color: #4a80a8;
}
.spider span {
    transform: scaleX(.63);
    transform-origin: left;
}
.spider svg {
    width: 17px;
    height: 18px;
}
.overlap {
    width: 60px;
    height: 22px;
    margin-left: 9px;
    shape-rendering: crispEdges;
}
.rs {
    margin-left: 12px;
    width: 52px;
    font: bold 17px "Liberation Serif", serif;
    letter-spacing: -.3px;
    color: #d81838;
}
.rs svg {
    width: 25px;
    height: 22px;
}
.logp {
    margin-left: 12px;
    width: 40px;
    font: 10px "DejaVu Sans Mono", monospace;
    letter-spacing: -.8px;
    color: #007070;
}
.logp svg {
    width: 14px;
    height: 20px;
    margin-right: 2px;
    shape-rendering: crispEdges;
}
.overflow {
    width: 5px;
    height: 7px;
    margin: 14px 0 0 16px;
    border-top: 1px solid #000;
}
.overflow::after {
    content: "";
    display: block;
    margin-top: 2px;
    border: 3px solid transparent;
    border-top-color: #000;
    border-bottom: 0;
    width: 0;
}
.doc-close {
    margin: 0 9px 0 auto;
}
.doc-close svg {
    width: 13px;
    height: 14px;
}
.peptide {
    display: flex;
    gap: 1px;
    margin-left: 4px;
}
.peptide span {
    width: 18px;
    height: 18px;
    line-height: 17px;
    text-align: center;
    font-size: 10px;
    letter-spacing: -.3px;
    color: #0000a0;
    background: #f7a3a8;
    border: 1px solid #f07880;
    border-radius: 3px;
}
.peptide span + span {
    background: #a4abe8;
    border-color: #8890dc;
}
.peptide + .overflow {
    margin-left: 13px;
}

/* work area */
.work {
    display: flex;
    height: 846px;
}
.side {
    flex: none;
    display: flex;
    flex-direction: column;
    align-items: center;
    background: linear-gradient(#cbdcf7, #dff0ff);
}
.left {
    width: 32px;
    padding: 2px 1px 4px 0;
    border-right: 1px solid #a6b9e4;
}
.right {
    width: 41px;
    padding: 2px 2px 0 0;
    border-left: 1px solid #a6b9e4;
}
.cell {
    position: relative;
    flex: none;
    display: flex;
    align-items: center;
    justify-content: center;
    width: 26px;
    height: 26px;
    color: #0000b0;
}
.cell .w28 {
    width: 28px;
}
.mono {
    font: bold 14px "Liberation Serif", serif;
}
.any {
    font: bold 11px "DejaVu Sans Mono", monospace;
    letter-spacing: -.3px;
}
.r1 sup {
    font-size: 11px;
    margin-bottom: 6px;
}
.el {
    height: 24px;
    font: bold 15px/24px "Liberation Serif", serif;
    color: #0000b0;
}
.next {
    height: 20px;
    padding: 6px 0 0 14px;
}
.next svg {
    width: 7px;
    height: 6px;
}
.push {
    margin-top: auto;
}
.bigt {
    font: 23px "Liberation Serif", serif;
    color: #000;
}
.right hr {
    width: 31px;
    height: 1px;
    margin: 4px 0 3px;
    border: 0;
    background: #a6b9e4;
}
.frag {
    font: 11px "DejaVu Sans Mono", monospace;
    letter-spacing: -.6px;
    color: #0000a0;
}
.frag sub {
    font-size: 9px;
    margin-top: 5px;
}

.editor {
    display: grid;
    grid-template-columns: 29px 1802px 16px;
    grid-template-rows: 21px 809px 16px;
    background: #fff;
}
.unit {
    padding-left: 2px;
    line-height: 20px;
    text-align: center;
    border-right: 1px solid #a6b9e4;
    border-bottom: 1px solid #a6b9e4;
}
.ruler-h {
    grid-column: 2 / 4;
    width: 1818px;
    height: 21px;
}
.ruler-v {
    grid-row: 2 / 4;
    width: 29px;
    height: 825px;
}
.ruler-h, .ruler-v {
    shape-rendering: crispEdges;
    font-size: 11px;
    text-anchor: middle;
    fill: #1c1c1c;
}
.canvas {
    grid-row: 2;
    grid-column: 2;
    overflow: hidden;
    background: linear-gradient(to right, #cdddf0 792px, #c9d9f0 1100px, #bfcee6);
}
.page {
    position: relative;
    width: 793px;
    height: 809px;
    background: #fff;
    border-right: 1px solid #000;
    box-shadow: 4px 3px 0 #a9b8e3;
}
.margins {
    fill: none;
    stroke: #707070;
    stroke-dasharray: 4 3;
    shape-rendering: crispEdges;
}
.molecules {
    position: absolute;
    left: 149px;
    top: 252px;
}
.bonds {
    fill: none;
    stroke: #000;
    shape-rendering: crispEdges;
}
.bonds .solid {
    fill: #000;
}
.atoms {
    font: 12px "Noto Sans", sans-serif;
    fill: #101010;
}
.atoms .sub {
    font-size: 9.500px;
}
.mid {
    text-anchor: middle;
}

.scroll {
    display: flex;
    background: repeating-conic-gradient(#d4d0c8 0 25%, #fff 0 50%) 0 0 / 2px 2px;
}
.scroll.vert {
    grid-row: 2;
    grid-column: 3;
    flex-direction: column;
}
.scroll.horiz {
    grid-row: 3;
    grid-column: 2;
}
.btn, .thumb {
    flex: none;
    background: #d4d0c8;
    border: 1px solid #fff;
    border-right-color: #404040;
    border-bottom-color: #404040;
    box-shadow: inset -1px -1px 0 #808080;
}
.btn {
    display: flex;
    align-items: center;
    justify-content: center;
    width: 16px;
    height: 16px;
    padding: 0 1px 1px 0;
}
.btn::after {
    content: "";
    border: 4px solid transparent;
}
.up::after { border-bottom-color: #000; border-top: 0; }
.down::after { border-top-color: #000; border-bottom: 0; }
.prev::after { border-right-color: #000; border-left: 0; }
.fwd::after { border-left-color: #000; border-right: 0; }
.vert .thumb {
    height: 66px;
}
.horiz .thumb {
    width: 332px;
}
.track {
    flex: 1;
}
.corner {
    grid-row: 3;
    grid-column: 3;
    background: #d4d0c8;
}

/* bottom strips */
.strip {
    display: flex;
    justify-content: space-between;
    align-items: center;
    padding-right: 11px;
    background: linear-gradient(#dbe7fa, #f1f1ef 50%, #dbe7f9);
}
.colors {
    height: 17px;
    padding-bottom: 1px;
    border-top: 1px solid #a6b9e4;
    border-bottom: 1px solid #a6b9e4;
}
.swatches {
    display: flex;
    padding-left: 2px;
}
.swatch {
    width: 12px;
    height: 12px;
    border-right: 1px solid #000;
}
.swatch svg {
    width: 11px;
    height: 12px;
}
.rss {
    height: 19px;
    border-bottom: 1px solid #a6b9e4;
}
.rss > span {
    margin-bottom: 2px;
}
.feed {
    display: flex;
    width: 1846px;
    overflow: hidden;
    font-size: 14px;
    line-height: 18px;
    padding-top: 2px;
}
.feed p {
    flex: none;
    width: 448px;
    margin: 0;
    padding-left: 2px;
    white-space: nowrap;
    letter-spacing: -.38px;
    border-right: 1px solid #a6b9e4;
}
.feed a {
    color: #1000e0;
}
.feed em {
    font-style: normal;
    color: #100080;
}
.status {
    height: 19px;
    padding-bottom: 2px;
}
.info {
    display: grid;
    grid-template-columns: 99px 55px 28px 58px 22px 96px 69px auto;
    align-items: center;
    padding-left: 6px;
}
.info svg {
    width: 14px;
    height: 11px;
}
.formula sub {
    font-size: 10px;
    vertical-align: -2px;
    line-height: 0;
}
.formula {
    letter-spacing: .3px;
}
.windows {
    display: flex;
    align-items: center;
    height: 31px;
    padding-left: 2px;
    font-size: 14px;
    color: #000080;
    background: linear-gradient(#cbdcf7, #dceafa);
    border-bottom: 1px solid #a6b9e4;
}
.windows span {
    height: 26px;
    padding: 0 4px;
    line-height: 26px;
}
.windows span + span {
    margin-right: 4px;
}
.windows .active {
    width: 104px;
    padding-left: 3px;
    line-height: 24px;
    background: #faf5e3;
    border: 1px solid #7f9db9;
}
.windows i {
    margin: 0 6px 0 auto;
    font-style: normal;
}

/* desktop panel */
.taskbar {
    display: flex;
    justify-content: space-between;
    height: 41px;
    background: #2d2d2d;
}
.apps {
    display: flex;
    gap: 6px;
    padding-left: 2px;
}
.app {
    width: 40px;
    height: 41px;
    padding: 5px 4px 0;
}
.app:first-child {
    padding-left: 3px;
}
.app.open {
    border-bottom: 2px solid #8fb36a;
}
.app svg {
    width: 32px;
    height: 32px;
}
.prompt {
    font: bold 9px "DejaVu Sans Mono", monospace;
    fill: #e8e8e8;
}
.tray {
    display: flex;
    align-items: center;
    gap: 9.600px;
    padding-right: 6px;
}
.tray svg {
    width: 16px;
    height: 16px;
}
.tray .shield {
    margin: 0 2px 0 -2px;
}
.tray time {
    font: bold 13px "Noto Sans", sans-serif;
    letter-spacing: -.2px;
    color: #e0e4e8;
}

/* dialog */
.dialog {
    position: absolute;
    left: 925px;
    top: 408px;
    width: 518px;
    height: 142px;
    background: #d4d0c8;
    box-shadow: 0 3px 9px rgba(0, 0, 0, .85);
    font-family: "Noto Sans", sans-serif;
    font-size: 11px;
    color: #101010;
}
.dialog-title {
    position: relative;
    height: 24px;
    line-height: 24px;
    text-align: center;
    font-size: 13px;
    font-weight: 500;
    color: #444;
    background: #d9d9d9;
    border-top: 1px solid #f4f4f4;
}
.dialog-title svg {
    position: absolute;
    right: 10px;
    top: 4px;
    width: 14px;
    height: 14px;
}
.message {
    display: flex;
    align-items: center;
    height: 56px;
    padding-left: 12px;
}
.message svg {
    width: 30px;
    height: 32px;
}
.message p {
    margin: 0 0 2px 17px;
    white-space: nowrap;
    letter-spacing: .045px;
}
.qmark {
    font: 22px "Noto Sans", sans-serif;
    fill: #fff;
    text-anchor: middle;
}
.actions {
    display: flex;
    gap: 8px;
    padding-left: 180px;
}
.actions button {
    width: 75px;
    height: 25px;
    padding: 0;
    font: inherit;
    color: #101010;
    background: #d4d0c8;
    border: 1px solid #fff;
    border-right-color: #404040;
    border-bottom-color: #404040;
    box-shadow: inset -1px -1px 0 #808080;
}
.actions .default {
    padding: 2px;
    border-color: #000;
    box-shadow: inset 1px 1px 0 #fff, inset -1px -1px 0 #404040, inset -2px -2px 0 #808080;
}
.actions span {
    display: flex;
    align-items: center;
    justify-content: center;
    height: 18px;
    letter-spacing: -.3px;
}
.default span {
    margin: 0 1px;
    border: 1px dotted #000;
}
.actions svg {
    width: 17px;
    height: 16px;
    margin-right: 5px;
}
.dialog label {
    display: flex;
    align-items: center;
    margin-top: 12px;
    padding-left: 12px;
    line-height: 14px;
    letter-spacing: -.38px;
}
.dialog label i {
    width: 13px;
    height: 13px;
    margin-right: 4px;
    background: #fff;
    border: 1px solid #fff;
    border-top: 2px solid #555;
    border-left: 2px solid #555;
}
```
FILE: script.js
```js
const NS = "http://www.w3.org/2000/svg";
const MM = 3.7795;

function add(parent, tag, attrs, text) {
    const el = document.createElementNS(NS, tag);
    for (const key in attrs) el.setAttribute(key, attrs[key]);
    if (text !== undefined) el.textContent = text;
    parent.appendChild(el);
}

// horizontal ruler
const h = document.getElementById("rulerH");
for (let n = 1; n <= 480; n++) {
    const x = Math.floor(n * MM);
    const len = n % 10 === 0 ? 7 : n % 5 === 0 ? 5 : 3;
    add(h, "rect", { x: x, y: 21 - len, width: 1, height: len, fill: "#000" });
    if (n % 10 === 0) add(h, "text", { x: x + 0.5, y: 10 }, n);
}
add(h, "text", { x: 5, y: 10 }, 0);
add(h, "rect", { x: 0, y: 20, width: 793, height: 1, fill: "#a6b9e4" });

// vertical ruler
const v = document.getElementById("rulerV");
add(v, "rect", { x: 28, y: 0, width: 1, height: 825, fill: "#a6b9e4" });
for (let n = 1; n <= 218; n++) {
    const y = Math.floor(n * MM - 0.4);
    const len = n % 10 === 0 ? 17 : n % 5 === 0 ? 5 : 3;
    add(v, "rect", { x: 29 - len, y: y, width: len, height: 1, fill: "#000" });
    if (n % 10 === 0) add(v, "text", { x: 15, y: y + 10 }, n);
}
add(v, "text", { x: 15, y: 9 }, 0);

// palette
const colors = ["#ff0000", "#800000", "#ffff00", "#808000", "#00e000", "#008000", "#00ffff", "#008080",
    "#0000ff", "#000080", "#ff00ff", "#800080", "#ffffff", "#f8f8f8", "#eeeeee", "#e0e0e0", "#d0d0d0",
    "#c0c0c0", "#b0b0b0", "#a0a0a0", "#909090", "#808080", "#707070", "#606060", "#505050", "#404040",
    "#303030", "#000000"];
const box = document.getElementById("swatches");
box.innerHTML = '<div class="swatch"><svg viewBox="0 0 11 12"><path d="M0 0h11v12H0z" fill="#fff"/><path d="M1 1l9 9M10 1l-9 9" stroke="#000"/></svg></div>';
colors.forEach(c => {
    box.innerHTML += `<div class="swatch" style="background:${c}"></div>`;
});
```
